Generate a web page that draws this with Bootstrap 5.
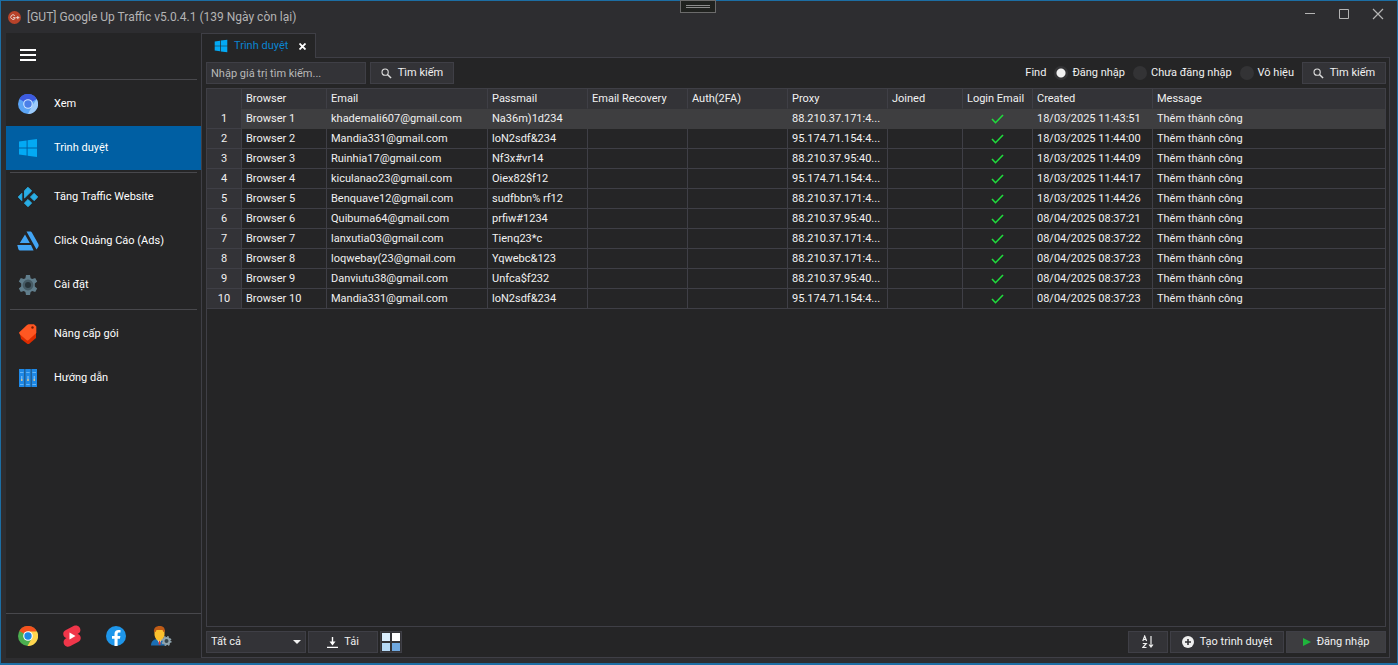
<!DOCTYPE html>
<html lang="vi" data-bs-theme="dark">
<head>
<meta charset="utf-8">
<meta name="viewport" content="width=device-width, initial-scale=1">
<title>[GUT] Google Up Traffic</title>
<link href="https://cdn.jsdelivr.net/npm/bootstrap@5.3.0/dist/css/bootstrap.min.css" rel="stylesheet">
<style>
  :root { --win: #2d2d30; --pane: #252526; --ctl: #333337; --line: #3f3f46; --txt: #f1f1f1; }
  body { font-family: Roboto, "Liberation Sans", sans-serif; font-size: 11px; line-height: 16px; color: var(--txt); background: var(--win); }
  svg { display: block; flex: none; }
  .app-window { border: 1px solid #1c6ea4; border-bottom-width: 2px; }
  .title-bar { height: 32px; color: #b4b4b4; font-size: 12px; padding: 0 1px 0 7px; gap: 6px; }
  .title-bar button { border: 0; background: none; color: #b4b4b4; padding: 0 8px; height: 32px; padding-bottom: 6px; }
  .grip { position: absolute; top: -1px; left: 50%; width: 36px; height: 13px; transform: translateX(-50%); margin-left: -1px; border: 1px solid #6b6b6b; background: #20221f; padding: 4px 5px; }
  .grip span { display: block; height: 1px; background: #8c8c8c; margin-bottom: 1px; }
  .app-body { padding: 0 7px 5px 5px; }
  .side { width: 195px; background: var(--pane); flex: none; }
  .side a, .side .menu-btn { height: 44px; padding: 0 12px; gap: 16px; color: #fff; text-decoration: none; }
  .side .menu-btn { border: 0; background: none; padding: 0 14px; }
  .side a.active { background: #005fa3; }
  .side hr { margin: 2px 4px; border: 0; border-top: 1px solid #48484c; opacity: 1; }
  .side-foot { height: 45px; border-top: 1px solid #48484c; padding: 0 12px; gap: 24px; }
  .side .side-foot a { padding: 0; }
  .tab-head { height: 25px; width: 115px; margin-bottom: -1px; border: 1px solid var(--line); border-bottom: 0; background: var(--pane); color: #0a84d0; padding: 0 9px 0 12px; gap: 6px; z-index: 1; white-space: nowrap; }
  .tab-head button { border: 0; background: none; padding: 0; }
  .pane-box { border: 1px solid var(--line); background: var(--pane); padding: 4px 3px 4px 4px; }
  .ctl { height: 22px; border: 1px solid var(--line); border-radius: 0; background: var(--ctl); color: var(--txt); padding: 0 4px; font-size: 11px; line-height: 18px; gap: 6px; }
  .ctl::placeholder { color: #b9b9b9; opacity: 1; }
  .btn.ctl:hover { background: #3f3f46; color: #fff; }
  .btn.hot { background: #3d3d40; }
  .w-search { width: 160px; } .w-find { width: 84px; } .w-all { width: 100px; } .w-load { width: 70px; } .w-sort { width: 40px; } .w-new { width: 114px; } .w-login { width: 100px; }
  select.ctl { appearance: none; background: var(--ctl) url("data:image/svg+xml,%3Csvg xmlns='http://www.w3.org/2000/svg' width='8' height='4'%3E%3Cpath d='M0 0h8L4 4z' fill='%23f1f1f1'/%3E%3C/svg%3E") no-repeat right 4px center; }
  .pick { gap: 4px; }
  .pick input { appearance: none; width: 14px; height: 14px; margin: 0; border-radius: 50%; background: #333335; }
  .pick input:checked { background: radial-gradient(#f1f1f1 0 4px, #333335 5px); }
  .grid-box { border: 1px solid var(--line); margin: 4px 0; overflow: auto; min-height: 0; }
  .grid-table { table-layout: fixed; width: 100%; border-collapse: separate; border-spacing: 0; }
  .grid-table th, .grid-table td { height: 20px; padding: 1px 4px 0; line-height: 18px; font-weight: 400; white-space: nowrap; overflow: hidden; border-right: 1px solid var(--line); border-bottom: 1px solid var(--line); }
  .grid-table thead th { background: var(--ctl); border-bottom-color: var(--ctl); }
  .grid-table tbody th { background: var(--ctl); text-align: center; }
  .grid-table tr > :last-child { border-right: 0; }
  .grid-table tr.picked td { background: #3e3e40; border-color: #3e3e40; }
  .grid-table td svg { margin: 0 auto; }
</style>
</head>
<body>
<svg width="0" height="0" class="position-absolute" aria-hidden="true">
  <symbol id="win" viewBox="0 0 20 20"><path fill="#03a9f4" d="M1 3.600 8.600 2.500v7H1zM9.600 2.300 19 1v8.500H9.600zM1 10.500h7.600v7L1 16.400zM9.600 10.500H19V19l-9.400-1.300z"/></symbol>
  <symbol id="lens" viewBox="0 0 12 12"><circle cx="4.500" cy="4.500" r="3.400" fill="none" stroke="#ddd" stroke-width="1.200"/><path d="m7 7 4 4" stroke="#ddd" stroke-width="1.600"/></symbol>
  <symbol id="ok" viewBox="0 0 13 10"><path d="m1 5 3.500 3.700L12 1" fill="none" stroke="#1fdc3c" stroke-width="1.600"/></symbol>
</svg>
<div class="app-window d-flex flex-column vh-100 position-relative">
  <div class="grip"><span></span><span></span></div>
  <header class="title-bar d-flex align-items-center">
    <svg width="13" height="13" viewBox="0 0 13 13"><circle cx="6.500" cy="6.500" r="6.500" fill="#b8432a"/><path d="M6.800 4.600a2.300 2.300 0 1 0 .5 2.100H5M9.800 5v3.200M8.200 6.600h3.200" fill="none" stroke="#e8d5cf"/></svg>
    <span class="flex-grow-1">[GUT] Google Up Traffic v5.0.4.1 (139 Ngày còn lại)</span>
    <button aria-label="Minimize"><svg width="12" height="12"><path d="M1 5.500h10" stroke="currentColor"/></svg></button>
    <button aria-label="Maximize"><svg width="12" height="12"><path d="M1.500 1.500h9v9h-9z" fill="none" stroke="currentColor"/></svg></button>
    <button class="me-1" aria-label="Close"><svg width="12" height="12"><path d="m1 1 10 10M11 1 1 11" stroke="currentColor" stroke-width="1.200"/></svg></button>
  </header>
  <div class="app-body d-flex flex-grow-1 overflow-hidden">
    <nav class="side d-flex flex-column">
      <button class="menu-btn d-flex align-items-center" aria-label="Menu"><svg width="16" height="12"><path d="M0 1h16M0 6h16M0 11h16" stroke="#fff" stroke-width="2"/></svg></button>
      <hr>
      <a href="#" class="d-flex align-items-center"><svg width="20" height="20" viewBox="0 0 20 20"><circle cx="10" cy="10" r="10" fill="#5ba4f5"/><path d="M10 10 1.300 5A10 10 0 0 1 18.700 5z" fill="#3d5be0"/><path d="M18.700 5A10 10 0 0 1 10 20l4-8z" fill="#9ccbfb"/><circle cx="10" cy="10" r="4.800" fill="#cfe4ff"/><circle cx="10" cy="10" r="3.700" fill="#4a7fe8"/></svg>Xem</a>
      <a href="#" class="active d-flex align-items-center"><svg width="20" height="20"><use href="#win"/></svg>Trình duyệt</a>
      <hr>
      <a href="#" class="d-flex align-items-center"><svg width="20" height="20" viewBox="0 0 22 22" overflow="visible"><g fill="#29aee6" stroke="#29aee6" stroke-linejoin="round"><path d="m11 .3 4 4L7.200 12V4zM17.700 7l4 4-4 4-4-4zM11 13.700l4 4-4 4-4-4zM4.200 7v8L.3 11z"/></g></svg>Tăng Traffic Website</a>
      <a href="#" class="d-flex align-items-center"><svg width="20" height="20" viewBox="1 0 20 20" overflow="visible"><path fill="#42a5f5" d="M8 3.500 12.800 12H2.800zM.3 14H14l2.600 5.500H3.800c-1.300 0-2-.6-2.500-1.600zM9.500.5H13c1 0 1.600.5 2 1.200l6.200 11c.7 1.400.6 2.200 0 3.200l-1.700 2.700z"/></svg>Click Quảng Cáo (Ads)</a>
      <a href="#" class="d-flex align-items-center"><svg width="20" height="20" viewBox="0 0 20 20"><path fill="#607d8b" d="M8 0h4l.6 3.200 1.600.9 3-1.200 2 3.500L16.800 8.500v3l2.400 2.100-2 3.500-3-1.100-1.600.9L12 20H8l-.6-3.100-1.600-.9-3 1.100-2-3.500 2.400-2.100v-3L.8 6.400l2-3.500 3 1.200 1.600-.9z"/><circle cx="10" cy="10" r="4.200" fill="#263238" stroke="#455a64" stroke-width="2.400"/></svg>Cài đặt</a>
      <hr>
      <a href="#" class="d-flex align-items-center"><svg width="20" height="20" viewBox="0 0 20 20"><path fill="#dd2c00" d="M2 10l1 5 6.500 5h1.500l7-6V5z"/><path fill="#ff5722" d="M1 8.500 9 1l1.500-.8H16L18.300 2.500V9L10 16.500H9L1.500 10z"/><circle cx="14.500" cy="3.500" r="1.200" fill="#7a1c05"/></svg>Nâng cấp gói</a>
      <a href="#" class="d-flex align-items-center"><svg width="20" height="20" viewBox="0 0 20 20"><path fill="#1e88e5" d="M1 1h5.600v18H1zM7.200 1h5.600v18H7.200zM13.400 1H19v18h-5.600z"/><path stroke="#64b5f6" d="M2 4.500h3.500M8.200 4.500h3.500M14.400 4.500H18M2 16.500h3.500M8.200 16.500h3.500M14.400 16.500H18"/><path stroke="#90caf9" d="M3.800 8v5M10 8v5M16.200 8v5"/><path stroke="#ffca6a" d="M3.800 11v2M10 11v2M16.200 11v2"/></svg>Hướng dẫn</a>
      <div class="side-foot d-flex align-items-center mt-auto">
        <a href="#" class="d-flex align-items-center" aria-label="Chrome"><svg width="20" height="20" viewBox="0 0 20 20"><circle cx="10" cy="10" r="10" fill="#4caf50"/><path d="M10 10 1.300 5A10 10 0 0 1 18.700 5z" fill="#f4511e"/><path d="M10 5.500h9A10 10 0 0 1 9.500 20l4.500-8z" fill="#ffd54f"/><circle cx="10" cy="10" r="4.800" fill="#fff"/><circle cx="10" cy="10" r="3.700" fill="#1e88e5"/></svg></a>
        <a href="#" class="d-flex align-items-center" aria-label="Shorts"><svg width="20" height="22" viewBox="0 0 20 22"><path fill="#f0364a" d="m3.500 5.300 8.500-4.500c5-2 8.500 4 5 7.200L15.500 9c4 1 4.300 6 1 7.800l-8.500 4.500c-5 2-8.500-4-5-7.200L4.500 13C.5 12 .2 7 3.500 5.300z"/><path fill="#fff" d="m7.500 7.500 6 3.500-6 3.500z"/></svg></a>
        <a href="#" class="d-flex align-items-center" aria-label="Facebook"><svg width="20" height="20" viewBox="0 0 20 20"><circle cx="10" cy="10" r="10" fill="#1e96ea"/><path fill="#fff" d="M8.500 20v-7.200H6V10h2.500V7.900c0-2.700 1.500-4 3.900-4l2.100.2v2.500h-1.200c-1.300 0-1.700.7-1.700 1.600V10h2.800l-.5 2.800h-2.300V20z"/></svg></a>
        <a href="#" class="d-flex align-items-center" aria-label="Account"><svg width="22" height="20" viewBox="0 0 22 20"><path fill="#1a6fb5" d="M1 19.500c0-4.500 3-6 6-6.500h5l3 6.500z"/><path fill="#fff" d="m7 13 2.500 5 2.500-5z"/><path fill="#e53935" d="M9 14.500h1.200l.5 4H8.500z"/><path fill="#fbc02d" d="M4.500 4h10v5c-.5 3-2.500 6-5 6s-4.500-3-5-6z"/><path fill="#bf5b16" d="M4 6c-.5-4 2-6 5.500-6S15 1.500 15 6h-1.500l-1-2h-6l-1 2z"/><circle cx="16.500" cy="15" r="3" fill="#37474f" stroke="#90a4ae" stroke-width="2"/><circle cx="16.500" cy="15" r="4.300" fill="none" stroke="#90a4ae" stroke-width="1.500" stroke-dasharray="1.700"/></svg></a>
      </div>
    </nav>
    <main class="d-flex flex-column flex-grow-1 overflow-hidden">
      <div class="tab-head d-flex align-items-center position-relative"><svg width="14" height="14"><use href="#win"/></svg><span class="flex-grow-1">Trình duyệt</span><button aria-label="Close tab"><svg width="7" height="7"><path d="m.5.5 6 6M6.500.5l-6 6" stroke="#fff" stroke-width="1.800"/></svg></button></div>
      <div class="pane-box d-flex flex-column flex-grow-1 overflow-hidden">
        <form class="d-flex align-items-center gap-1">
          <input class="form-control ctl w-search" type="text" placeholder="Nhập giá trị tìm kiếm..." aria-label="Nhập giá trị tìm kiếm">
          <button type="button" class="btn ctl w-find d-flex align-items-center justify-content-center"><svg width="11" height="11"><use href="#lens"/></svg>Tìm kiếm</button>
          <span class="ms-auto">Find</span>
          <label class="pick d-flex align-items-center ms-1"><input type="radio" name="find" checked>Đăng nhập</label>
          <label class="pick d-flex align-items-center ms-1"><input type="radio" name="find">Chưa đăng nhập</label>
          <label class="pick d-flex align-items-center ms-1 me-1"><input type="radio" name="find">Vô hiệu</label>
          <button type="button" class="btn ctl w-find d-flex align-items-center justify-content-center"><svg width="11" height="11"><use href="#lens"/></svg>Tìm kiếm</button>
        </form>
        <div class="grid-box flex-grow-1">
          <table class="grid-table">
            <colgroup><col style="width:35px"><col style="width:85px"><col style="width:161px"><col style="width:100px"><col style="width:100px"><col style="width:100px"><col style="width:100px"><col style="width:75px"><col style="width:70px"><col style="width:120px"><col></colgroup>
            <thead><tr><th></th><th>Browser</th><th>Email</th><th>Passmail</th><th>Email Recovery</th><th>Auth(2FA)</th><th>Proxy</th><th>Joined</th><th>Login Email</th><th>Created</th><th>Message</th></tr></thead>
            <tbody>
              <tr class="picked"><th>1</th><td>Browser 1</td><td>khademali607@gmail.com</td><td>Na36m)1d234</td><td></td><td></td><td>88.210.37.171:4...</td><td></td><td><svg width="13" height="10"><use href="#ok"/></svg></td><td>18/03/2025 11:43:51</td><td>Thêm thành công</td></tr>
              <tr><th>2</th><td>Browser 2</td><td>Mandia331@gmail.com</td><td>loN2sdf&amp;234</td><td></td><td></td><td>95.174.71.154:4...</td><td></td><td><svg width="13" height="10"><use href="#ok"/></svg></td><td>18/03/2025 11:44:00</td><td>Thêm thành công</td></tr>
              <tr><th>3</th><td>Browser 3</td><td>Ruinhia17@gmail.com</td><td>Nf3x#vr14</td><td></td><td></td><td>88.210.37.95:40...</td><td></td><td><svg width="13" height="10"><use href="#ok"/></svg></td><td>18/03/2025 11:44:09</td><td>Thêm thành công</td></tr>
              <tr><th>4</th><td>Browser 4</td><td>kiculanao23@gmail.com</td><td>Oiex82$f12</td><td></td><td></td><td>95.174.71.154:4...</td><td></td><td><svg width="13" height="10"><use href="#ok"/></svg></td><td>18/03/2025 11:44:17</td><td>Thêm thành công</td></tr>
              <tr><th>5</th><td>Browser 5</td><td>Benquave12@gmail.com</td><td>sudfbbn% rf12</td><td></td><td></td><td>88.210.37.171:4...</td><td></td><td><svg width="13" height="10"><use href="#ok"/></svg></td><td>18/03/2025 11:44:26</td><td>Thêm thành công</td></tr>
              <tr><th>6</th><td>Browser 6</td><td>Quibuma64@gmail.com</td><td>prfiw#1234</td><td></td><td></td><td>88.210.37.95:40...</td><td></td><td><svg width="13" height="10"><use href="#ok"/></svg></td><td>08/04/2025 08:37:21</td><td>Thêm thành công</td></tr>
              <tr><th>7</th><td>Browser 7</td><td>lanxutia03@gmail.com</td><td>Tienq23*c</td><td></td><td></td><td>88.210.37.171:4...</td><td></td><td><svg width="13" height="10"><use href="#ok"/></svg></td><td>08/04/2025 08:37:22</td><td>Thêm thành công</td></tr>
              <tr><th>8</th><td>Browser 8</td><td>loqwebay(23@gmail.com</td><td>Yqwebc&amp;123</td><td></td><td></td><td>88.210.37.171:4...</td><td></td><td><svg width="13" height="10"><use href="#ok"/></svg></td><td>08/04/2025 08:37:23</td><td>Thêm thành công</td></tr>
              <tr><th>9</th><td>Browser 9</td><td>Danviutu38@gmail.com</td><td>Unfca$f232</td><td></td><td></td><td>88.210.37.95:40...</td><td></td><td><svg width="13" height="10"><use href="#ok"/></svg></td><td>08/04/2025 08:37:23</td><td>Thêm thành công</td></tr>
              <tr><th>10</th><td>Browser 10</td><td>Mandia331@gmail.com</td><td>loN2sdf&amp;234</td><td></td><td></td><td>95.174.71.154:4...</td><td></td><td><svg width="13" height="10"><use href="#ok"/></svg></td><td>08/04/2025 08:37:23</td><td>Thêm thành công</td></tr>
            </tbody>
          </table>
        </div>
        <div class="d-flex align-items-center" style="gap:2px">
          <select class="form-select ctl w-all" aria-label="Nhóm"><option>Tất cả</option></select>
          <button class="btn ctl w-load d-flex align-items-center justify-content-center"><svg width="11" height="11"><path d="M0 10.500h11M5.500 0v7" stroke="#fff" stroke-width="1.400"/><path d="M2.500 4.500h6l-3 4z" fill="#fff"/></svg>Tải</button>
          <button class="btn ctl p-0" aria-label="Grid"><svg width="20" height="20"><path fill="#dcefff" d="M1 1h8v8H1z"/><path fill="#fff" d="M11 1h8v8h-8z"/><path fill="#b5d8f5" d="M1 11h8v8H1z"/><path fill="#6fa8e0" d="M11 11h8v8h-8z"/></svg></button>
          <button class="btn ctl w-sort d-flex align-items-center justify-content-center ms-auto" aria-label="Sort"><svg width="12" height="14" viewBox="0 0 12 14"><path d="m.8 6 1.900-5 1.900 5M1.500 4.500h2.400M.8 8.500h3.500L.8 12.500h3.700M9 1v10M7 9.500l2 2.500 2-2.500" fill="none" stroke="#eee" stroke-width="1.200"/></svg></button>
          <button class="btn ctl w-new d-flex align-items-center justify-content-center"><svg width="12" height="12"><circle cx="6" cy="6" r="6" fill="#eee"/><path d="M6 3v6M3 6h6" stroke="#333337" stroke-width="1.600"/></svg>Tạo trình duyệt</button>
          <button class="btn ctl hot w-login d-flex align-items-center justify-content-center"><svg width="8" height="8"><path d="m0 0 8 4-8 4z" fill="#1fb53c"/></svg>Đăng nhập</button>
        </div>
      </div>
    </main>
  </div>
</div>
<script src="https://cdn.jsdelivr.net/npm/bootstrap@5.3.0/dist/js/bootstrap.bundle.min.js"></script>
</body>
</html>
